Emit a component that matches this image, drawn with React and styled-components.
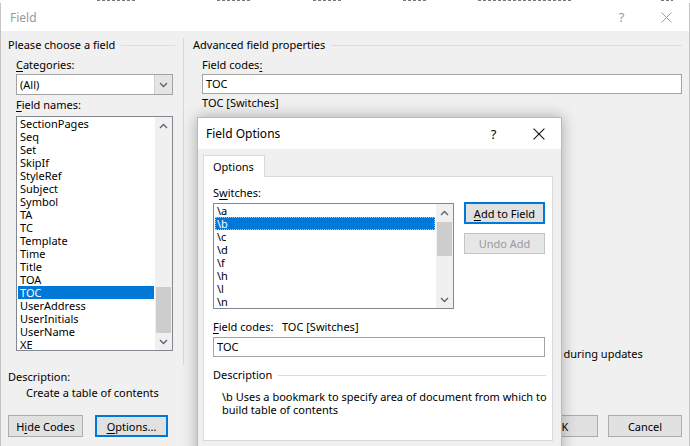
import React from "react";
import styled, { createGlobalStyle } from "styled-components";

const GlobalStyle = createGlobalStyle`
  html, body { margin: 0; padding: 0; }
  body {
    font-family: "Segoe UI", "Noto Sans", sans-serif;
    font-size: 11px;
    color: #000;
    background: #fff;
  }
`;

const Screen = styled.div`
  position: relative;
  width: 690px;
  height: 446px;
  overflow: hidden;
  background: #fff;
`;

const TopStrip = styled.div`
  display: flex;
  height: 3px;
  background: #fff;
`;

const Fragment = styled.span`
  display: block;
  height: 1px;
  margin-left: ${(p) => p.$gap}px;
  width: ${(p) => p.$w}px;
  background: repeating-linear-gradient(90deg, #777 0 3px, transparent 3px 5px);
`;

const Window = styled.div`
  display: flex;
  flex-direction: column;
  height: 443px;
  background: #f0f0f0;
  border-left: 1px solid #c4c4c4;
  border-right: 1px solid #c4c4c4;
`;

const TitleBar = styled.div`
  display: flex;
  align-items: center;
  height: 28px;
  background: #fff;
  padding-left: 9px;
  color: ${(p) => (p.$active ? "#000" : "#999")};
  flex-shrink: 0;
`;

const TitleText = styled.div`
  flex: 1;
  font-size: 12px;
`;

const CaptionButton = styled.div`
  width: 45px;
  height: 100%;
  display: flex;
  align-items: center;
  justify-content: center;
  font-size: 13px;
  color: inherit;
`;

const Body = styled.div`
  display: flex;
  flex-direction: column;
  padding: 0 7px;
`;

const ColumnsRow = styled.div`
  display: flex;
  height: 334px;
`;

const LeftCol = styled.div`
  width: 175px;
  display: flex;
  flex-direction: column;
  padding-top: 7px;
`;

const VSeparator = styled.div`
  width: 1px;
  background: #d7d7d7;
  margin-top: 7px;
`;

const RightCol = styled.div`
  flex: 1;
  display: flex;
  flex-direction: column;
  padding: 7px 0 0 9px;
`;

const GroupHeader = styled.div`
  display: flex;
  align-items: center;
  height: 14px;
  line-height: 14px;
  gap: 6px;
  margin-right: ${(p) => p.$trim || 0}px;
  margin-top: ${(p) => p.$top || 0}px;
  &::after {
    content: "";
    flex: 1;
    height: 1px;
    background: #dcdcdc;
  }
`;

const Indent = styled.div`
  display: flex;
  flex-direction: column;
  padding-left: ${(p) => p.$pad}px;
`;

const Label = styled.div`
  height: 14px;
  line-height: 14px;
  margin-top: ${(p) => p.$top || 0}px;
  white-space: nowrap;
`;

const U = styled.span`
  text-decoration: underline;
  text-underline-offset: 2px;
`;

const Select = styled.div`
  display: flex;
  margin-top: 2px;
  height: 21px;
  width: 157px;
  box-sizing: border-box;
  border: 1px solid #a3a3a3;
  background: #fff;
`;

const SelectValue = styled.div`
  flex: 1;
  line-height: 19px;
  padding-left: 3px;
`;

const SelectButton = styled.div`
  width: 17px;
  display: flex;
  align-items: center;
  justify-content: center;
  background: #e5e5e5;
  border-left: 1px solid #cfcfcf;
`;

const ListBox = styled.div`
  display: flex;
  margin-top: ${(p) => p.$top || 0}px;
  width: ${(p) => p.$w}px;
  height: ${(p) => p.$h}px;
  box-sizing: border-box;
  border: 1px solid #828790;
  background: #fff;
  overflow: hidden;
`;

const Items = styled.div`
  flex: 1;
  padding: 0 1px;
  overflow: hidden;
`;

const Item = styled.div`
  height: 13px;
  line-height: 13px;
  padding-left: 2px;
  white-space: nowrap;
  background: ${(p) => (p.$selected ? "#0078d7" : "transparent")};
  color: ${(p) => (p.$selected ? "#fff" : "#000")};
  outline: ${(p) => (p.$focus ? "1px dotted #9ec9f0" : "none")};
  outline-offset: -1px;
`;

const ScrollBar = styled.div`
  width: 17px;
  display: flex;
  flex-direction: column;
  background: #f0f0f0;
`;

const ScrollArrow = styled.div`
  height: 17px;
  display: flex;
  align-items: center;
  justify-content: center;
  flex-shrink: 0;
`;

const Track = styled.div`
  flex: 1;
  position: relative;
`;

const Thumb = styled.div`
  position: absolute;
  left: 1px;
  right: 1px;
  background: #cdcdcd;
`;

const Input = styled.div`
  margin-top: ${(p) => p.$top || 0}px;
  height: ${(p) => p.$h || 20}px;
  width: ${(p) => (p.$w ? `${p.$w}px` : "auto")};
  box-sizing: border-box;
  border: 1px solid #a3a3a3;
  background: #fff;
  line-height: ${(p) => (p.$h || 20) - 2}px;
  padding-left: 3px;
`;

const Spacer = styled.div`
  flex: 1;
`;

const CheckRow = styled.div`
  display: flex;
  align-items: center;
  gap: 5px;
  height: 14px;
  margin: 0 0 5px 246px;
  white-space: nowrap;
`;

const CheckBox = styled.span`
  width: 11px;
  height: 11px;
  border: 1px solid #333;
  background: #fff;
`;

const DescBlock = styled.div`
  display: flex;
  flex-direction: column;
  margin-top: 5px;
`;

const DescText = styled.div`
  height: 16px;
  line-height: 16px;
  padding-left: 18px;
  margin-top: 1px;
`;

const Footer = styled.div`
  display: flex;
  justify-content: space-between;
  margin-top: 14px;
`;

const ButtonGroup = styled.div`
  display: flex;
  gap: ${(p) => p.$gap}px;
`;

const Button = styled.div`
  width: ${(p) => p.$w}px;
  height: ${(p) => p.$h || 22}px;
  box-sizing: border-box;
  border: ${(p) => (p.$default ? "2px solid #0078d7" : "1px solid #adadad")};
  background: ${(p) => (p.$disabled ? "#e6e6e6" : "#e1e1e1")};
  color: ${(p) => (p.$disabled ? "#9a9a9a" : "#000")};
  border-color: ${(p) => (p.$disabled ? "#c4c4c4" : undefined)};
  display: flex;
  align-items: center;
  justify-content: center;
  white-space: nowrap;
`;

/* Field Options dialog sits over the Field window */
const Dialog = styled.div`
  position: absolute;
  left: 197px;
  top: 117px;
  width: 365px;
  height: 345px;
  box-sizing: border-box;
  display: flex;
  flex-direction: column;
  background: #f0f0f0;
  border: 1px solid #b9b9b9;
  box-shadow: 0 0 14px rgba(0, 0, 0, 0.3);
`;

const DialogTitle = styled(TitleBar)`
  height: 31px;
  padding-left: 8px;
`;

const DialogBody = styled.div`
  padding: 6px 8px 0 5px;
`;

const Tab = styled.div`
  width: 62px;
  height: 22px;
  box-sizing: border-box;
  border: 1px solid #d9d9d9;
  border-bottom: none;
  background: #fff;
  line-height: 21px;
  padding-left: 9px;
  position: relative;
  z-index: 1;
`;

const TabPanel = styled.div`
  height: 265px;
  box-sizing: border-box;
  border: 1px solid #d9d9d9;
  background: #fff;
  margin-top: -1px;
  padding: 9px 6px 0 9px;
  display: flex;
  flex-direction: column;
`;

const SwitchRow = styled.div`
  display: flex;
  margin-top: 3px;
`;

const SideButtons = styled.div`
  display: flex;
  flex-direction: column;
  margin: -1px 0 0 10px;
  gap: 9px;
`;

const DescPara = styled.div`
  margin-top: 8px;
  padding-left: 9px;
  line-height: 13px;
  white-space: nowrap;
`;

const Chevron = ({ up, color = "#606060" }) => (
  <svg width="9" height="6" viewBox="0 0 9 6">
    <polyline
      points={up ? "1,5 4.5,1.5 8,5" : "1,1 4.5,4.5 8,1"}
      fill="none"
      stroke={color}
      strokeWidth="1.3"
    />
  </svg>
);

const CloseX = ({ size, color }) => (
  <svg width={size} height={size} viewBox="0 0 10 10">
    <path d="M0.5 0.5 L9.5 9.5 M9.5 0.5 L0.5 9.5" stroke={color} strokeWidth="0.9" />
  </svg>
);

const fieldNames = [
  "SectionPages", "Seq", "Set", "SkipIf", "StyleRef", "Subject", "Symbol",
  "TA", "TC", "Template", "Time", "Title", "TOA", "TOC",
  "UserAddress", "UserInitials", "UserName", "XE",
];

const switches = ["\\a", "\\b", "\\c", "\\d", "\\f", "\\h", "\\l", "\\n"];

const Scroll = ({ offset, size }) => (
  <ScrollBar>
    <ScrollArrow><Chevron up /></ScrollArrow>
    <Track>
      <Thumb style={{ top: offset, height: size }} />
    </Track>
    <ScrollArrow><Chevron /></ScrollArrow>
  </ScrollBar>
);

export default function App() {
  return (
    <Screen>
      <GlobalStyle />
      <TopStrip>
        <Fragment $gap={97} $w={40} />
        <Fragment $gap={80} $w={34} />
        <Fragment $gap={62} $w={30} />
        <Fragment $gap={60} $w={25} />
        <Fragment $gap={50} $w={95} />
        <Fragment $gap={88} $w={12} />
      </TopStrip>
      <Window>
        <TitleBar>
          <TitleText>Field</TitleText>
          <CaptionButton>?</CaptionButton>
          <CaptionButton>
            <CloseX size={11} color="#9a9a9a" />
          </CaptionButton>
        </TitleBar>
        <Body>
          <ColumnsRow>
            <LeftCol>
              <GroupHeader $trim={8}>Please choose a field</GroupHeader>
              <Indent $pad={8}>
                <Label $top={6}><U>C</U>ategories:</Label>
                <Select>
                  <SelectValue>(All)</SelectValue>
                  <SelectButton><Chevron /></SelectButton>
                </Select>
                <Label $top={3}><U>F</U>ield names:</Label>
                <ListBox $top={4} $w={157} $h={235}>
                  <Items>
                    {fieldNames.map((n) => (
                      <Item key={n} $selected={n === "TOC"}>{n}</Item>
                    ))}
                  </Items>
                  <Scroll offset={153} size={46} />
                </ListBox>
              </Indent>
            </LeftCol>
            <VSeparator />
            <RightCol>
              <GroupHeader>Advanced field properties</GroupHeader>
              <Indent $pad={9}>
                <Label $top={6}>Field codes<U>:</U></Label>
                <Input $top={2}>TOC</Input>
                <Label $top={2}>TOC [Switches]</Label>
              </Indent>
              <Spacer />
              <CheckRow>
                <CheckBox />
                Preserve formatting during updates
              </CheckRow>
            </RightCol>
          </ColumnsRow>
          <DescBlock>
            <Label>Description:</Label>
            <DescText>Create a table of contents</DescText>
          </DescBlock>
          <Footer>
            <ButtonGroup $gap={12}>
              <Button $w={75}>H<U>i</U>de Codes</Button>
              <Button $w={73} $default><U>O</U>ptions...</Button>
            </ButtonGroup>
            <ButtonGroup $gap={10}>
              <Button $w={75}>OK</Button>
              <Button $w={74}>Cancel</Button>
            </ButtonGroup>
          </Footer>
        </Body>
      </Window>

      <Dialog>
        <DialogTitle $active>
          <TitleText>Field Options</TitleText>
          <CaptionButton>?</CaptionButton>
          <CaptionButton>
            <CloseX size={12} color="#111" />
          </CaptionButton>
        </DialogTitle>
        <DialogBody>
          <Tab>Options</Tab>
          <TabPanel>
            <Label>S<U>w</U>itches:</Label>
            <SwitchRow>
              <ListBox $w={241} $h={106}>
                <Items>
                  {switches.map((s) => (
                    <Item key={s} $selected={s === "\\b"} $focus={s === "\\b"}>{s}</Item>
                  ))}
                </Items>
                <Scroll offset={1} size={34} />
              </ListBox>
              <SideButtons>
                <Button $w={81} $default><U>A</U>dd to Field</Button>
                <Button $w={81} $h={21} $disabled>Undo Add</Button>
              </SideButtons>
            </SwitchRow>
            <Label $top={11}>
              <U>F</U>ield codes:&nbsp;&nbsp; TOC [Switches]
            </Label>
            <Input $top={3} $w={332}>TOC</Input>
            <GroupHeader $top={11}>Description</GroupHeader>
            <DescPara>
              \b Uses a bookmark to specify area of document from which to
              <br />
              build table of contents
            </DescPara>
          </TabPanel>
        </DialogBody>
      </Dialog>
    </Screen>
  );
}
